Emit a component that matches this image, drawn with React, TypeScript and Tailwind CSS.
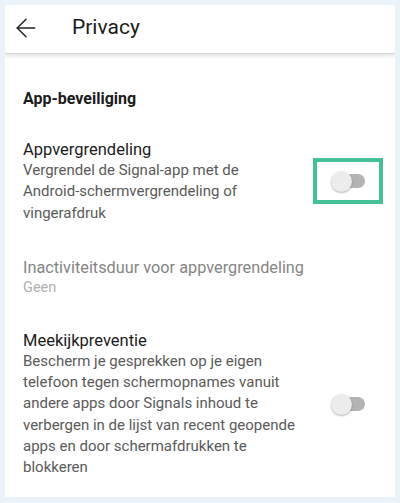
import { ArrowLeft } from "lucide-react"

function Toggle() {
  return (
    <div className="relative w-[34px] h-[22px] flex items-center">
      <div className="absolute right-0 w-[24px] h-[14px] rounded-full bg-[#b3b3b3]" />
      <div className="absolute left-0 w-[21px] h-[21px] rounded-full bg-[#ececec] shadow-[0_1px_2px_rgba(0,0,0,0.3)]" />
    </div>
  )
}

export default function App() {
  return (
    <div className="w-[400px] h-[503px] bg-[#eaf2fa] p-[5px] font-['Roboto',sans-serif]">
      <div className="h-[492px] bg-white overflow-hidden">
        <header className="h-[49px] flex items-center border-b border-[#d6d6d6] shadow-[0_2px_4px_rgba(0,0,0,0.12)] relative pb-[3px]">
          <ArrowLeft size={30} strokeWidth={1.2} className="ml-[6px] text-[#222]" />
          <h1 className="ml-[31px] text-[21px] text-[#1b1b1b]">Privacy</h1>
        </header>

        <div className="pl-[18px] pr-[12px] pt-[35px]">
          <h2 className="text-[16px] leading-[20px] font-bold text-[#1b1b1b]">App-beveiliging</h2>

          <div className="mt-[30px] flex items-center justify-between">
            <div>
              <div className="text-[16.5px] leading-[21px] text-[#1b1b1b]">Appvergrendeling</div>
              <p className="text-[15px] leading-[21.3px] text-[#5a5a5a]">
                Vergrendel de Signal-app met de<br />
                Android-schermvergrendeling of<br />
                vingerafdruk
              </p>
            </div>
            <div className="w-[70px] h-[46px] border-[4px] border-[#45c097] flex items-center justify-center">
              <Toggle />
            </div>
          </div>

          <div className="mt-[33px]">
            <div className="text-[16.3px] leading-[21px] text-[#858585]">Inactiviteitsduur voor appvergrendeling</div>
            <div className="text-[14.5px] leading-[20px] text-[#b0b0b0]">Geen</div>
          </div>

          <div className="mt-[32px] flex items-center justify-between">
            <div>
              <div className="text-[16.5px] leading-[21px] text-[#1b1b1b]">Meekijkpreventie</div>
              <p className="text-[15px] leading-[21.3px] text-[#5a5a5a]">
                Bescherm je gesprekken op je eigen<br />
                telefoon tegen schermopnames vanuit<br />
                andere apps door Signals inhoud te<br />
                verbergen in de lijst van recent geopende<br />
                apps en door schermafdrukken te<br />
                blokkeren
              </p>
            </div>
            <div className="w-[70px] flex justify-center">
              <Toggle />
            </div>
          </div>
        </div>
      </div>
    </div>
  )
}
